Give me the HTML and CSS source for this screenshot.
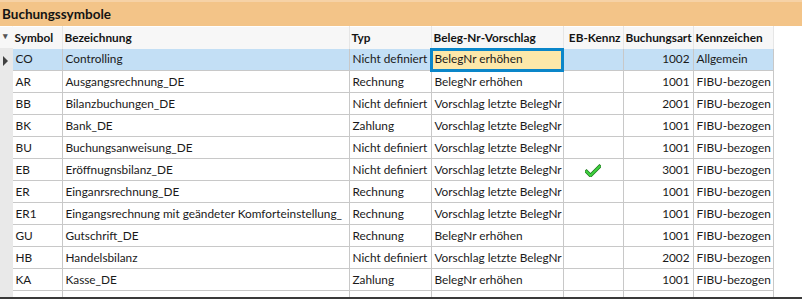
FILE: index.html
```html
<!DOCTYPE html>
<html lang="de">
<head>
<meta charset="utf-8">
<title>Buchungssymbole</title>
<link rel="stylesheet" href="styles.css">
</head>
<body>
<div class="window">
  <div class="title">Buchungssymbole</div>
  <div class="gridarea">
    <table class="grid">
      <colgroup>
        <col class="c-ind"><col class="c-sym"><col class="c-bez"><col class="c-typ"><col class="c-beleg"><col class="c-eb"><col class="c-art"><col class="c-kenn">
      </colgroup>
      <thead>
        <tr>
          <th class="ind"><span class="sort">&#9662;</span></th>
          <th>Symbol</th>
          <th>Bezeichnung</th>
          <th>Typ</th>
          <th>Beleg-Nr-Vorschlag</th>
          <th class="num">EB-Kennz</th>
          <th class="num">Buchungsart</th>
          <th>Kennzeichen</th>
        </tr>
      </thead>
      <tbody>
        <tr class="selected">
          <td class="ind"><span class="arrow"></span></td>
          <td>CO</td><td>Controlling</td><td>Nicht definiert</td><td class="focus">BelegNr erhöhen</td><td></td><td class="num">1002</td><td>Allgemein</td>
        </tr>
        <tr><td class="ind"></td><td>AR</td><td>Ausgangsrechnung_DE</td><td>Rechnung</td><td>BelegNr erhöhen</td><td></td><td class="num">1001</td><td>FIBU-bezogen</td></tr>
        <tr><td class="ind"></td><td>BB</td><td>Bilanzbuchungen_DE</td><td>Nicht definiert</td><td>Vorschlag letzte BelegNr</td><td></td><td class="num">2001</td><td>FIBU-bezogen</td></tr>
        <tr><td class="ind"></td><td>BK</td><td>Bank_DE</td><td>Zahlung</td><td>Vorschlag letzte BelegNr</td><td></td><td class="num">1001</td><td>FIBU-bezogen</td></tr>
        <tr><td class="ind"></td><td>BU</td><td>Buchungsanweisung_DE</td><td>Nicht definiert</td><td>Vorschlag letzte BelegNr</td><td></td><td class="num">1001</td><td>FIBU-bezogen</td></tr>
        <tr><td class="ind"></td><td>EB</td><td>Eröffnugnsbilanz_DE</td><td>Nicht definiert</td><td>Vorschlag letzte BelegNr</td><td class="check"><svg width="16" height="13" viewBox="0 0 16 13"><path d="M1.5 7.5 L5.5 11.5 L14.5 2.5" fill="none" stroke="#1f7a1f" stroke-width="3.6" stroke-linecap="square"/><path d="M1.5 7.5 L5.5 11.5 L14.5 2.5" fill="none" stroke="#3fd23f" stroke-width="2" stroke-linecap="square"/></svg></td><td class="num">3001</td><td>FIBU-bezogen</td></tr>
        <tr><td class="ind"></td><td>ER</td><td>Einganrsrechnung_DE</td><td>Rechnung</td><td>Vorschlag letzte BelegNr</td><td></td><td class="num">1001</td><td>FIBU-bezogen</td></tr>
        <tr><td class="ind"></td><td>ER1</td><td>Eingangsrechnung mit geändeter Komforteinstellung_</td><td>Rechnung</td><td>Vorschlag letzte BelegNr</td><td></td><td class="num">1001</td><td>FIBU-bezogen</td></tr>
        <tr><td class="ind"></td><td>GU</td><td>Gutschrift_DE</td><td>Rechnung</td><td>BelegNr erhöhen</td><td></td><td class="num">1001</td><td>FIBU-bezogen</td></tr>
        <tr><td class="ind"></td><td>HB</td><td>Handelsbilanz</td><td>Nicht definiert</td><td>Vorschlag letzte BelegNr</td><td></td><td class="num">2002</td><td>FIBU-bezogen</td></tr>
        <tr><td class="ind"></td><td>KA</td><td>Kasse_DE</td><td>Zahlung</td><td>BelegNr erhöhen</td><td></td><td class="num">1001</td><td>FIBU-bezogen</td></tr>
        <tr><td class="ind"></td><td>LG</td><td>Lohn/Gehalt_DE</td><td>Nicht definiert</td><td>Vorschlag letzte BelegNr</td><td></td><td class="num">1001</td><td>FIBU-bezogen</td></tr>
      </tbody>
    </table>
  </div>
  <div class="bottombar"></div>
</div>
</body>
</html>
```
FILE: styles.css
```css
html, body {
  margin: 0;
  padding: 0;
  background: #ffffff;
  overflow: hidden;
}
.window {
  width: 802px;
  height: 299px;
  display: flex;
  flex-direction: column;
  font-family: Lato, "Open Sans", sans-serif;
  font-size: 11.8px;
  color: #1a1a1a;
}
.title {
  height: 24px;
  flex: none;
  background: #f3c488;
  border-top: 2px solid #f6d2a6;
  font-weight: bold;
  font-size: 13.5px;
  line-height: 25px;
  padding-left: 2px;
  color: #141414;
}
.gridarea {
  flex: 1;
  overflow: hidden;
  background: #ffffff;
}
.bottombar {
  height: 2px;
  flex: none;
  background: #3a3a3a;
}
.grid {
  border-collapse: collapse;
  table-layout: fixed;
  width: 773px;
}
.c-ind { width: 12px; }
.c-sym { width: 50px; }
.c-bez { width: 287px; }
.c-typ { width: 82px; }
.c-beleg { width: 132px; }
.c-eb { width: 60px; }
.c-art { width: 70px; }
.c-kenn { width: 80px; }

.grid th, .grid td {
  padding: 0 3px;
  white-space: nowrap;
  overflow: hidden;
  text-align: left;
}
.grid th {
  height: 21px;
  background: #f7f7f7;
  font-weight: bold;
  border-right: 1px solid #e6e6e6;
  border-top: 1px solid #ffffff;
  color: #141414;
  padding: 0 2px;
}
.grid td {
  height: 21px;
  border-right: 1px solid #c8c8c8;
  border-bottom: 1px solid #c8c8c8;
  line-height: 20px;
}
.grid th.num, .grid td.num { text-align: right; }
.grid .ind {
  padding: 0;
  background: #e9e9e9;
  border-bottom: 1px solid #e9e9e9;
  border-right: 1px solid #e9e9e9;
  text-align: center;
}
.grid th.ind { background: #f7f7f7; border-right-color: #f7f7f7; padding: 0; }
.sort {
  font-size: 9px;
  color: #555555;
  position: relative;
  top: -3px;
}
.arrow {
  display: inline-block;
  width: 0;
  height: 0;
  border-top: 5px solid transparent;
  border-bottom: 5px solid transparent;
  border-left: 5px solid #404040;
  vertical-align: middle;
  margin-left: -1px;
}
.selected td { background: #c3dff5; }
.selected td.ind { background: #e9e9e9; }
.selected td.focus {
  background: #fde8a9;
  outline: 3px solid #0a86c9;
  outline-offset: -2px;
}
.grid td.check { text-align: center; }
.check svg { vertical-align: middle; }
```
